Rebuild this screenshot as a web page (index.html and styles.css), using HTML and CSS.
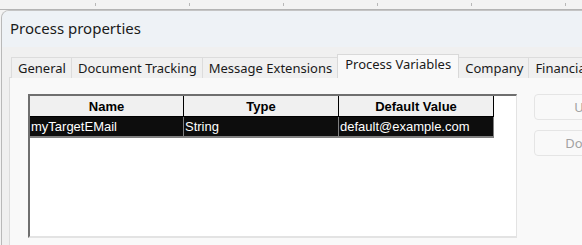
FILE: index.html
```html
<!DOCTYPE html>
<html>
<head>
    <title>Process properties</title>
    <link rel="stylesheet" href="styles.css">
</head>
<body>
    <div class="ruler"></div>

    <div class="window">
        <div class="title-bar">Process properties</div>

        <div class="dialog-body">
            <div class="tabs">
                <div class="tab">General</div>
                <div class="tab">Document Tracking</div>
                <div class="tab">Message Extensions</div>
                <div class="tab active">Process Variables</div>
                <div class="tab">Company</div>
                <div class="tab">Financial</div>
            </div>

            <div class="tab-panel">
                <div class="grid-box">
                    <table class="var-table">
                        <tr>
                            <th class="col-name">Name</th>
                            <th>Type</th>
                            <th>Default Value</th>
                        </tr>
                        <tr class="selected">
                            <td>myTargetEMail</td>
                            <td>String</td>
                            <td>default@example.com</td>
                        </tr>
                    </table>
                </div>

                <div class="side-buttons">
                    <button disabled>Up</button>
                    <button disabled>Down</button>
                </div>
            </div>
        </div>
    </div>
</body>
</html>
```

FILE: styles.css
```css
html, body {
    margin: 0;
    padding: 0;
    width: 582px;
    height: 245px;
    overflow: hidden;
    background-color: #f3f3f3;
}

.ruler {
    height: 9px;
    border-bottom: 1px solid #b4b4b4;
    background-color: #f3f3f3;
    position: relative;
}

.ruler::after {
    content: "";
    position: absolute;
    left: 95px;
    top: 3px;
    width: 500px;
    height: 3px;
    background-image: repeating-linear-gradient(to right, #b8b8b8 0, #b8b8b8 1px, transparent 1px, transparent 94px);
}

.window {
    margin-left: 1px;
    border-left: 1px solid #b9b9b9;
    border-top: 1px solid #c4c4c4;
    border-top-left-radius: 8px;
    background-color: #f0f0f0;
    overflow: hidden;
    height: 240px;
}

.title-bar {
    height: 36px;
    background-color: #eef2f6;
    padding-left: 8px;
    font-family: "Noto Sans", sans-serif;
    font-size: 15px;
    line-height: 35px;
    color: #1a1a1a;
}

.dialog-body {
    padding-top: 8px;
    padding-left: 7px;
}

.tabs {
    display: flex;
    align-items: flex-end;
    height: 23px;
    padding-left: 2px;
    font-family: "Noto Sans", sans-serif;
    font-size: 13px;
    color: #1a1a1a;
}

.tab {
    height: 20px;
    line-height: 20px;
    padding: 0 5px 0 6px;
    border: 1px solid #dcdcdc;
    border-bottom: none;
    margin-right: -1px;
    background-color: #f0f0f0;
    white-space: nowrap;
}

.tab.active {
    height: 23px;
    line-height: 19px;
    padding: 0 7px;
    background-color: #f9f9f9;
    border-color: #d9d9d9;
    position: relative;
    z-index: 1;
}

.tab-panel {
    display: flex;
    align-items: flex-start;
    gap: 17px;
    background-color: #f9f9f9;
    border-left: 1px solid #dcdcdc;
    border-top: 1px solid #dcdcdc;
    margin-top: -1px;
    padding: 16px 0 0 18px;
    height: 200px;
}

.grid-box {
    width: 486px;
    height: 140px;
    background-color: #ffffff;
    border-top: 2px solid #6f6f6f;
    border-left: 2px solid #6f6f6f;
    border-right: 1px solid #e3e3e3;
    border-bottom: 2px solid #e3e3e3;
    flex-shrink: 0;
}

.var-table {
    border-collapse: collapse;
    font-family: "Liberation Sans", Arial, sans-serif;
    font-size: 13px;
}

.var-table th {
    width: 154px;
    height: 20px;
    padding: 0;
    background-color: #f0f0f0;
    border-right: 1px solid #000000;
    border-bottom: 1px solid #000000;
    font-weight: bold;
    color: #000000;
    text-align: center;
}

.var-table th.col-name {
    width: 153px;
}

.var-table td {
    height: 19px;
    padding: 0 0 0 1px;
    background-color: #0d0d0d;
    color: #ffffff;
    border-right: 1px solid #808080;
    border-bottom: 2px solid #808080;
    text-align: left;
}

.side-buttons {
    display: flex;
    flex-direction: column;
    gap: 10px;
    flex-shrink: 0;
}

.side-buttons button {
    width: 98px;
    height: 26px;
    border: 1px solid #e5e5e5;
    border-radius: 4px;
    background-color: #f9f9f9;
    color: #a2a2a2;
    font-family: "Noto Sans", sans-serif;
    font-size: 13px;
    padding: 0;
}
```
